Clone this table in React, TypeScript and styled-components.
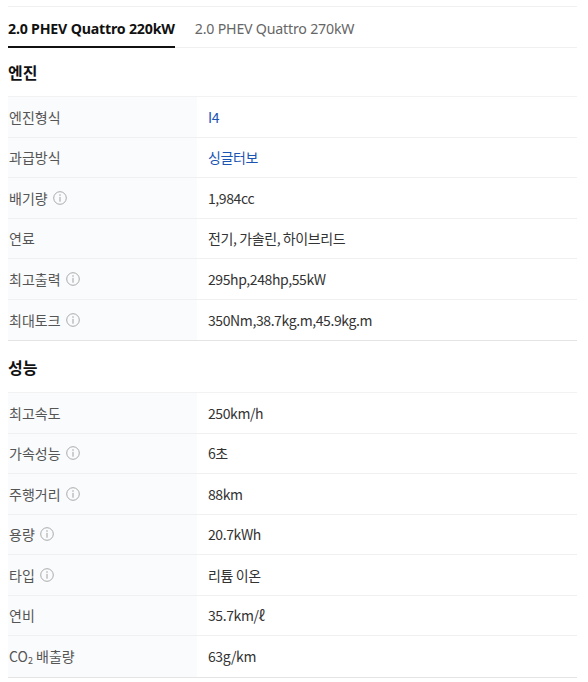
import React, { useState } from 'react';
import styled, { createGlobalStyle } from 'styled-components';

const GlobalStyle = createGlobalStyle`
  body {
    margin: 0;
    background: #ffffff;
    font-family: "Noto Sans CJK KR", "Noto Sans", sans-serif;
  }
`;

const Page = styled.div`
  padding: 6px 11px 0 8px;
`;

const TabBar = styled.div`
  display: flex;
  height: 40px;
  border-top: 1px solid #f1f1f1;
  border-bottom: 1px solid #f0f0f0;
  gap: 20px;
`;

const Tab = styled.button<{ $active: boolean }>`
  background: none;
  border: none;
  padding: 4px 0 0;
  margin-bottom: -1px;
  font-family: "Noto Sans", "Noto Sans CJK KR", sans-serif;
  font-size: 14.2px;
  font-weight: ${(p) => (p.$active ? 700 : 400)};
  color: ${(p) => (p.$active ? '#111111' : '#666666')};
  border-bottom: 2px solid ${(p) => (p.$active ? '#111111' : 'transparent')};
  cursor: pointer;
  letter-spacing: -0.2px;
`;

const SectionTitle = styled.h3<{ $height: number }>`
  margin: 0;
  height: ${(p) => p.$height}px;
  display: flex;
  align-items: center;
  font-size: 16px;
  font-weight: 700;
  color: #111111;
`;

const Table = styled.div`
  border-top: 1px solid #f2f2f2;
  border-bottom: 1px solid #e4e4e4;
`;

const Row = styled.div`
  display: grid;
  grid-template-columns: 189px 1fr;
  height: 40.5px;
  box-sizing: border-box;
  border-bottom: 1px solid #f0f0f0;
  &:last-child {
    border-bottom: none;
  }
`;

const Label = styled.div`
  display: flex;
  align-items: center;
  gap: 5px;
  padding-left: 1px;
  background: #fafbfc;
  font-size: 14px;
  color: #555555;
`;

const Value = styled.div<{ $link?: boolean }>`
  display: flex;
  align-items: center;
  padding-left: 11px;
  font-size: 14px;
  color: ${(p) => (p.$link ? '#1b55b3' : '#333333')};
  letter-spacing: -0.4px;
`;

const Sub = styled.span`
  font-size: 9px;
  vertical-align: -2px;
`;

const InfoIcon = () => (
  <svg width="14" height="14" viewBox="0 0 14 14" fill="none">
    <circle cx="7" cy="7" r="6.3" stroke="#a0a0a0" strokeWidth="0.9" />
    <circle cx="7" cy="4.1" r="0.75" fill="#a0a0a0" />
    <path d="M7 5.9v4.8" stroke="#a0a0a0" strokeWidth="1" />
  </svg>
);

type Spec = { label: React.ReactNode; value: string; info?: boolean; link?: boolean };

const engine: Spec[] = [
  { label: '엔진형식', value: 'I4', link: true },
  { label: '과급방식', value: '싱글터보', link: true },
  { label: '배기량', value: '1,984cc', info: true },
  { label: '연료', value: '전기, 가솔린, 하이브리드' },
  { label: '최고출력', value: '295hp,248hp,55kW', info: true },
  { label: '최대토크', value: '350Nm,38.7kg.m,45.9kg.m', info: true },
];

const performance: Spec[] = [
  { label: '최고속도', value: '250km/h' },
  { label: '가속성능', value: '6초', info: true },
  { label: '주행거리', value: '88km', info: true },
  { label: '용량', value: '20.7kWh', info: true },
  { label: '타입', value: '리튬 이온', info: true },
  { label: '연비', value: '35.7km/ℓ' },
  {
    label: (
      <span>
        CO<Sub>2</Sub> 배출량
      </span>
    ),
    value: '63g/km',
  },
];

const SpecTable = ({ specs }: { specs: Spec[] }) => (
  <Table>
    {specs.map((s, i) => (
      <Row key={i}>
        <Label>
          {s.label}
          {s.info && <InfoIcon />}
        </Label>
        <Value $link={s.link}>{s.value}</Value>
      </Row>
    ))}
  </Table>
);

const App = () => {
  const [tab, setTab] = useState(0);
  const tabs = ['2.0 PHEV Quattro 220kW', '2.0 PHEV Quattro 270kW'];

  return (
    <Page>
      <GlobalStyle />
      <TabBar>
        {tabs.map((t, i) => (
          <Tab key={t} $active={tab === i} onClick={() => setTab(i)}>
            {t}
          </Tab>
        ))}
      </TabBar>
      <SectionTitle $height={48}>엔진</SectionTitle>
      <SpecTable specs={engine} />
      <SectionTitle $height={51}>성능</SectionTitle>
      <SpecTable specs={performance} />
    </Page>
  );
};

export default App;
